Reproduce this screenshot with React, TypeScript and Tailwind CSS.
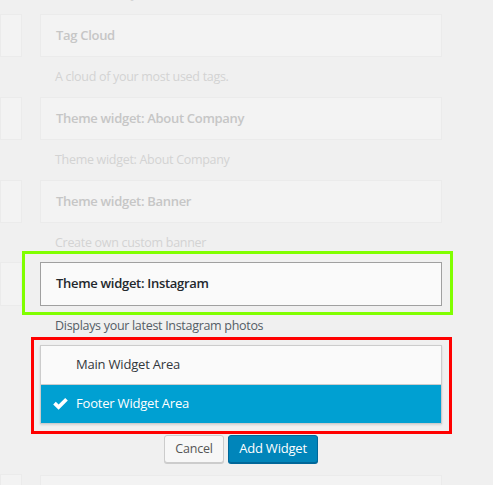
import React from "react";

const FONT = { fontFamily: '"Open Sans", "Noto Sans", sans-serif' };

type Widget = { title: string; desc: string };

const FADED: Widget[] = [
  { title: "Tag Cloud", desc: "A cloud of your most used tags." },
  { title: "Theme widget: About Company", desc: "Theme widget: About Company" },
  { title: "Theme widget: Banner", desc: "Create own custom banner" },
];

function FadedWidget({ w }: { w: Widget }) {
  return (
    <div>
      <div className="ml-[18px] flex h-[43px] w-[402px] items-center border border-[#ebebeb] bg-[#f3f3f3] px-[15px]">
        <span className="text-[13px] font-semibold tracking-[-0.3px] text-[#c6c6c6]">{w.title}</span>
      </div>
      <div className="ml-[33px] flex h-[40px] items-center text-[12.5px] tracking-[-0.3px] text-[#d3d3d3]">{w.desc}</div>
    </div>
  );
}

function Check() {
  return (
    <svg width="15" height="12" viewBox="0 0 15 12" className="shrink-0">
      <path d="M0.2 6.4 L2.8 3.8 L5.6 6.6 L12.2 0 L14.8 2.6 L5.6 11.8 Z" fill="#fff" />
    </svg>
  );
}

export default function App() {
  return (
    <div className="flex h-[485px] w-[493px] items-start overflow-hidden bg-[#f0f0f0]" style={FONT}>
      {/* left column stubs */}
      <div className="w-[22px] shrink-0 pt-[14px]">
        <div className="h-[43px] border border-[#ebebeb] bg-[#f3f3f3]" />
        <div className="mt-[40px] h-[43px] border border-[#ebebeb] bg-[#f3f3f3]" />
        <div className="mt-[40px] h-[43px] border border-[#ebebeb] bg-[#f3f3f3]" />
        <div className="mt-[39px] h-[44px] border border-[#ebebeb] bg-[#f3f3f3]" />
        <div className="mt-[168px] h-[43px] border border-[#ebebeb] bg-[#f3f3f3]" />
      </div>

      {/* widget list */}
      <div className="w-[431px] shrink-0">
        <div className="-mt-[15px] ml-[33px] h-[29px] text-[12.5px] leading-[18px] tracking-[-0.3px] text-[#d3d3d3]">
          A calendar of your site’s Posts.
        </div>
        {FADED.map((w) => (
          <FadedWidget key={w.title} w={w} />
        ))}

        <div className="-mt-[12px] w-[431px] border-[3px] border-[#80ff00] pb-[6px] pl-[15px] pr-[8px] pt-[8px]">
          <div className="flex h-[44px] w-[402px] items-center border border-[#a0a0a0] bg-[#fafafa] px-[15px]">
            <span className="text-[13px] font-semibold tracking-[-0.3px] text-[#23282d]">Theme widget: Instagram</span>
          </div>
        </div>
        <div className="ml-[33px] flex h-[22px] items-center text-[12.5px] tracking-[-0.3px] text-[#555d66]">
          Displays your latest Instagram photos
        </div>

        <div className="ml-[9px] w-[421px] border-[3px] border-[#ff0000] pb-[7px] pl-[6px] pr-[6px] pt-[5px]">
          <div className="w-[402px] border border-[#cccccc] shadow-[0_1px_2px_rgba(0,0,0,0.12)]">
            <div className="flex h-[39px] items-center border-b border-[#cccccc] bg-[#fafafa] pl-[35px] text-[13px] tracking-[-0.2px] text-[#32373c]">
              Main Widget Area
            </div>
            <div className="flex h-[38px] items-center gap-[8px] bg-[#00a0d2] pl-[12px] text-[13px] tracking-[-0.2px] text-white">
              <Check />
              <span>Footer Widget Area</span>
            </div>
          </div>
        </div>

        <div className="ml-[18px] mt-[1px] flex w-[402px] justify-center gap-[4px]">
          <button
            type="button"
            className="h-[28px] w-[60px] rounded-[3px] border border-[#cccccc] bg-[#f7f7f7] text-[12.5px] tracking-[-0.2px] text-[#555555] shadow-[0_1px_0_#cccccc]"
          >
            Cancel
          </button>
          <button
            type="button"
            className="h-[28px] w-[90px] rounded-[3px] border border-[#006799] bg-[#0085ba] text-[13px] tracking-[-0.2px] text-white shadow-[0_1px_0_#006799]"
          >
            Add Widget
          </button>
        </div>

        <div className="ml-[18px] mt-[12px] h-[43px] w-[402px] border border-[#ebebeb] bg-[#f3f3f3]" />
      </div>
    </div>
  );
}
